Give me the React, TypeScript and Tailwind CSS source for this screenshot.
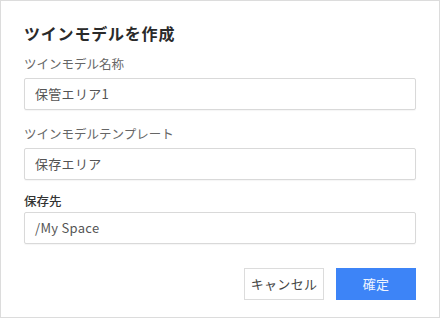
import React from "react";

const font = { fontFamily: '"Noto Sans CJK JP", "Noto Sans", sans-serif' };

function Field({ value }: { value: string }) {
  return (
    <div className="flex h-[32px] w-full items-center rounded-[2px] border border-[#d9d9d9] bg-white px-[10px] text-[13px] tracking-[0.3px] text-[#555] shadow-[0_1px_1px_rgba(0,0,0,0.04)]">
      {value}
    </div>
  );
}

export default function App() {
  return (
    <div
      style={font}
      className="box-border flex h-[318px] w-[440px] flex-col border border-[#dcdcdc] bg-white px-[23px] pt-[20px]"
    >
      <h1 className="h-[24px] text-[16px] font-bold leading-[24px] tracking-[0.8px] text-[#2a2a2a]">
        ツインモデルを作成
      </h1>
      <div className="mt-[10px] h-[18px] text-[12.5px] leading-[18px] text-[#666]">
        ツインモデル名称
      </div>
      <div className="mt-[5px]">
        <Field value="保管エリア1" />
      </div>
      <div className="mt-[15px] h-[18px] text-[12.5px] leading-[18px] text-[#666]">
        ツインモデルテンプレート
      </div>
      <div className="mt-[5px]">
        <Field value="保存エリア" />
      </div>
      <div className="mt-[12px] h-[18px] text-[12.5px] font-medium leading-[18px] text-[#333]">
        保存先
      </div>
      <div className="mt-[2px]">
        <Field value="/My Space" />
      </div>
      <div className="mt-[24px] flex justify-end gap-[12px]">
        <button className="flex h-[32px] w-[80px] items-center justify-center border border-[#dcdcdc] bg-white text-[13px] tracking-[0.3px] text-[#444]">
          キャンセル
        </button>
        <button className="flex h-[32px] w-[80px] items-center justify-center bg-[#3d84f7] text-[13px] tracking-[0.3px] text-[#eef4ff]">
          確定
        </button>
      </div>
    </div>
  );
}
